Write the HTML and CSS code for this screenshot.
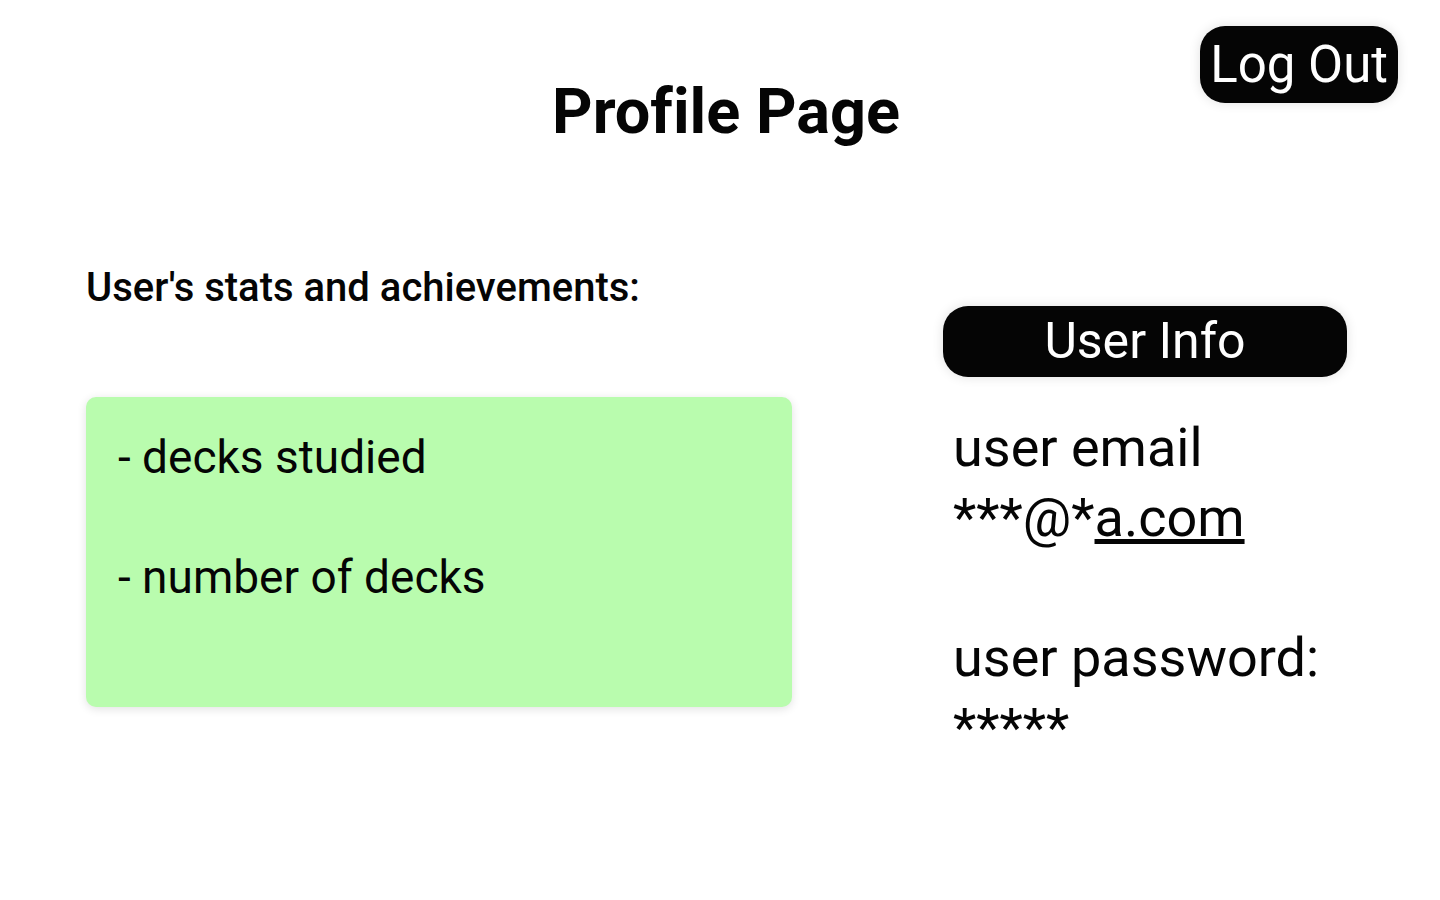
FILE: index.html
```html
<!DOCTYPE html>
<html lang="en">
<head>
<meta charset="utf-8">
<title>Profile Page</title>
<link rel="stylesheet" href="styles.css">
</head>
<body>
<header class="header">
  <h1 class="title">Profile Page</h1>
  <button class="pill logout" type="button">Log Out</button>
</header>
<main class="content">
  <section class="stats">
    <h2 class="stats-title">User's stats and achievements:</h2>
    <div class="card">
      <p class="stat">- decks studied</p>
      <p class="stat">- number of decks</p>
    </div>
  </section>
  <section class="info">
    <button class="pill info-button" type="button">User Info</button>
    <div class="details">
      <p class="detail">user email<br>***@*<a class="link" href="http://a.com">a.com</a></p>
      <p class="detail">user password:<br>*****</p>
    </div>
  </section>
</main>
</body>
</html>
```

FILE: styles.css
```css
* {
  box-sizing: border-box;
}

body {
  margin: 0;
  background: #fff;
  color: #050505;
  font-family: Roboto, sans-serif;
}

h1,
h2,
p {
  margin: 0;
}

.header {
  display: grid;
  grid-template-columns: 1fr auto 1fr;
  align-items: start;
  padding: 26px 42px 0 54px;
}

.title {
  grid-column: 2;
  padding-top: 48px;
  font-size: 63px;
  font-weight: 700;
  font-variant-ligatures: none;
  line-height: 75px;
}

.pill {
  border: 0;
  border-radius: 25px;
  background: #050505;
  color: #fff;
  font-family: inherit;
  font-size: 50px;
  line-height: 70px;
  text-align: center;
  box-shadow: 0 0 12px rgba(0, 0, 0, 0.12);
}

.logout {
  justify-self: end;
  padding: 4px 10px 3px;
  font-size: 51px;
}

.content {
  display: grid;
  grid-template-columns: 706fr 404fr;
  column-gap: 151px;
  align-items: start;
  padding: 115px 93px 40px 86px;
}

.stats-title {
  font-size: 40px;
  font-weight: 500;
  line-height: 47px;
}

.card {
  display: grid;
  gap: 60px;
  margin-top: 86px;
  padding: 30px 32px 100px;
  border-radius: 10px;
  background: #b9fcae;
  box-shadow: 0 2px 10px rgba(0, 0, 0, 0.12);
}

.stat {
  font-size: 46px;
  line-height: 60px;
}

.info {
  padding-top: 42px;
}

.info-button {
  width: 100%;
  padding: 0 0 1px;
}

.details {
  display: grid;
  gap: 70px;
  padding: 36px 10px 0;
}

.detail {
  font-size: 54px;
  line-height: 70px;
}

.link {
  color: inherit;
  text-decoration-thickness: 5px;
  text-decoration-skip-ink: none;
}
```
